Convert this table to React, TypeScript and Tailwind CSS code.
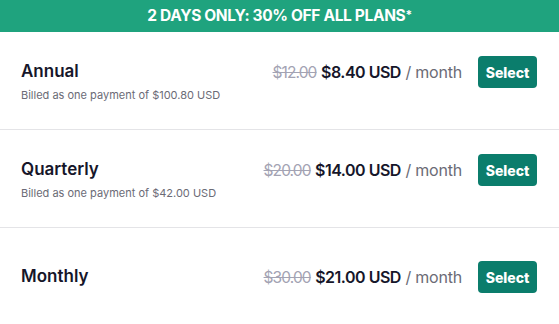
import React from "react";

const plans = [
  { name: "Annual", old: "$12.00", price: "$8.40 USD", billed: "Billed as one payment of $100.80 USD", pt: "pt-[24px]" },
  { name: "Quarterly", old: "$20.00", price: "$14.00 USD", billed: "Billed as one payment of $42.00 USD", pt: "pt-[24px]" },
  { name: "Monthly", old: "$30.00", price: "$21.00 USD", billed: "", pt: "pt-[33px]" },
];

export default function App() {
  return (
    <div className="w-[559px] h-[324px] overflow-hidden bg-white" style={{ fontFamily: "Inter, 'Noto Sans', sans-serif" }}>
      <div className="h-8 bg-[#1fa37e] flex items-center justify-center">
        <span className="text-white text-[15.5px] font-bold tracking-[-0.35px] leading-none">
          2 DAYS ONLY: 30% OFF ALL PLANS<sup className="text-[12px] relative -top-[2px]">*</sup>
        </span>
      </div>
      {plans.map((p, i) => (
        <div
          key={p.name}
          className={`h-[98px] ${i < 2 ? "border-b border-[#e4e4e7]" : ""} pl-[21px] pr-[22px] ${p.pt} flex items-start justify-between`}
        >
          <div className="mt-[3px]">
            <div className="text-[17px] leading-6 font-semibold text-[#16162a]">{p.name}</div>
            {p.billed && <div className="mt-[4px] text-[11px] leading-4 text-[#6b6b76]">{p.billed}</div>}
          </div>
          <div className="flex items-center h-8">
            <div className="text-[16px] leading-6">
              <span className="line-through text-[#a3a3b3] text-[15.5px] tracking-[-0.9px]">{p.old}</span>{" "}
              <span className="font-semibold text-[#16162a] tracking-[-0.5px]">{p.price}</span>{" "}
              <span className="text-[#6b6b76] tracking-[-0.2px]">/ month</span>
            </div>
            <button className="ml-4 w-[59px] h-8 rounded-[4px] bg-[#0b7d6c] text-white text-[14px] font-extrabold">
              Select
            </button>
          </div>
        </div>
      ))}
    </div>
  );
}
